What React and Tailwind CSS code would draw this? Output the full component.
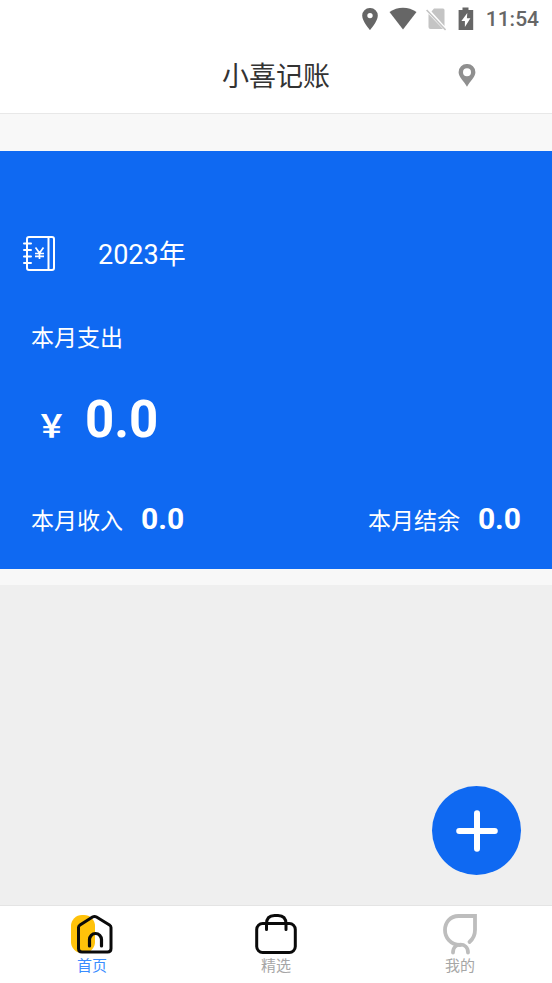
import React from 'react';

function StatusBar() {
  return (
    <div className="flex h-[38px] items-center justify-end pr-[13px] text-[#666666]">
      <svg className="mr-[11px] h-6 w-4" viewBox="0 0 16 24" fill="currentColor" aria-hidden="true">
        <path fillRule="evenodd" d="M8 1A7.500 7.500 0 0 0 .2 8.700c0 5.400 7.800 14.300 7.800 14.300s7.800-8.900 7.800-14.300A7.500 7.500 0 0 0 8 1zm0 4.900a2.700 2.700 0 1 1 0 5.400 2.700 2.700 0 0 1 0-5.400z" />
      </svg>
      <svg className="mr-[9px] h-6 w-7" viewBox="0 0 28 24" fill="currentColor" aria-hidden="true">
        <path d="M.5 5C8.500-.8 19.500-.8 27.500 5L14 22.500z" />
      </svg>
      <svg className="mr-3 h-6 w-5" viewBox="0 0 20 24" aria-hidden="true">
        <path fill="#c4c4c4" d="M8 1.500h9a1.500 1.500 0 0 1 1.500 1.500v16L5.500 4.500z M2.500 7l14.500 15h-12.500a2 2 0 0 1-2-2z" />
        <path stroke="#c4c4c4" strokeWidth="1.600" d="M.6 3l19 20" />
      </svg>
      <svg className="mr-3 h-6 w-4" viewBox="0 0 16 24" aria-hidden="true">
        <path fill="currentColor" d="M4.500 .6h6v2.300h4.700v20H.6v-20h3.900z" />
        <path fill="#fff" d="M9.300 6L3.400 14h3.500v6l5.500-8.800H8.900z" />
      </svg>
      <span className="font-['Roboto'] text-[21px] font-medium leading-6">11:54</span>
    </div>
  );
}

function Header() {
  return (
    <header className="grid h-[76px] grid-cols-3 items-center border-b border-[#e8e8e8]">
      <h1 className="col-start-2 pt-0.5 text-center text-[27px] leading-9 text-[#333333]">小喜记账</h1>
      <button type="button" aria-label="定位" className="mr-[76px] justify-self-end text-[#8f8f8f]">
        <svg className="h-6 w-[18px]" viewBox="0 0 18 24" fill="currentColor" aria-hidden="true">
          <path fillRule="evenodd" d="M9 0A8.200 8.200 0 0 0 .6 8.200C.6 13 6 17 9 22.800 12 17 17.400 13 17.400 8.200A8.200 8.200 0 0 0 9 0zm0 4.200a4 4 0 1 1 0 8 4 4 0 0 1 0-8z" />
        </svg>
      </button>
    </header>
  );
}

function Ledger() {
  return (
    <svg className="h-9 w-[33px]" viewBox="0 0 33 36" fill="none" stroke="#fff" strokeWidth="2" strokeLinecap="round" aria-hidden="true">
      <rect x="4" y="2" width="27" height="33" rx="2" />
      <path d="M25.500 2.500v32" />
      <path d="M1 8.500h7M1 15h7M1 21.500h7M1 28h7" />
      <path d="M12.500 12.500l4 5.500 4-5.500M16.500 17.500v6.500M12 18.500h9M12 21.300h9" strokeWidth="1.700" strokeLinecap="butt" />
    </svg>
  );
}

function Total({ label, value }) {
  return (
    <div className="flex items-center gap-[18px]">
      <span className="pt-1.5 text-[23px] leading-8">{label}</span>
      <span className="text-[30px] font-bold leading-8">{value}</span>
    </div>
  );
}

function Summary() {
  return (
    <section className="bg-[#0f69f2] px-[31px] pb-[31px] pt-[82px] text-white">
      <div className="-ml-2 flex items-center gap-[42px]">
        <Ledger />
        <h2 className="pt-1 text-[27px] leading-9">2023年</h2>
      </div>
      <p className="mt-12 text-[23px] leading-9">本月支出</p>
      <p className="mt-[30px] flex items-baseline gap-[18px] pl-[5px]">
        <span className="text-[31px] font-bold leading-9">{'\uFFE5'}</span>
        <span className="text-[51px] font-bold leading-[66px]">0.0</span>
      </p>
      <div className="mt-[47px] flex items-center justify-between">
        <Total label="本月收入" value="0.0" />
        <Total label="本月结余" value="0.0" />
      </div>
    </section>
  );
}

function HomeIcon() {
  return (
    <svg className="h-[42px] w-[42px]" viewBox="0 0 42 42" fill="none" aria-hidden="true">
      <rect x="0" y="2" width="24" height="38" rx="11" fill="#ffc20a" />
      <path d="M7.500 14.500q0-1.500 1.500-2.500L21.500 4q2-1.200 4 0L38.500 12q1.500 1 1.500 2.500V35.500q0 3.500-3.500 3.500H11q-3.500 0-3.500-3.500z" stroke="#0a0a0a" strokeWidth="3" strokeLinejoin="round" />
      <path d="M18.500 33v-6.500a6 6 0 0 1 12 0V33" stroke="#0a0a0a" strokeWidth="3.200" strokeLinecap="round" />
    </svg>
  );
}

function BagIcon() {
  return (
    <svg className="h-[42px] w-[42px]" viewBox="0 0 42 42" fill="none" stroke="#0a0a0a" strokeWidth="3" strokeLinecap="round" aria-hidden="true">
      <rect x="1.700" y="10.500" width="38.600" height="29" rx="6" />
      <path d="M11.500 16.500V11q0-8.500 8-8.500h3.500q8 0 8 8.500v5.500" />
    </svg>
  );
}

function ProfileIcon() {
  return (
    <svg className="h-[42px] w-[42px]" viewBox="0 0 42 42" fill="none" stroke="#bdbdbd" strokeWidth="3.800" strokeLinecap="round" aria-hidden="true">
      <path d="M30.500 29c4-3.500 5.500-6.500 5.500-12V3H19.500C11 3 6 9.500 6 17s5.500 15 15 15" />
      <path d="M14 39.500c0-10.500 15-10.500 15 0" />
    </svg>
  );
}

function Tab({ href, label, color, children, current }) {
  return (
    <a href={href} aria-current={current ? 'page' : undefined} className={`flex flex-1 flex-col items-center pt-[7px] ${color}`}>
      {children}
      <span className="text-[15px] leading-[22px]">{label}</span>
    </a>
  );
}

export default function App() {
  return (
    <div className="flex min-h-screen flex-col bg-white font-['Roboto','Noto_Sans_CJK_SC',sans-serif]">
      <StatusBar />
      <Header />
      <main className="flex flex-1 flex-col bg-[#efefef]">
        <div className="bg-[#f8f8f8] pb-4 pt-[37px]">
          <Summary />
        </div>
        <button type="button" aria-label="记一笔" className="mb-[30px] mr-[31px] mt-auto flex h-[89px] w-[89px] items-center justify-center self-end rounded-full bg-[#0f69f2]">
          <svg className="h-[42px] w-[42px]" viewBox="0 0 42 42" stroke="#fff" strokeWidth="6" strokeLinecap="round" aria-hidden="true">
            <path d="M21 3.200v35.600M3.200 21h35.600" />
          </svg>
        </button>
      </main>
      <nav className="flex h-[78px] border-t border-[#e4e4e4]">
        <Tab href="#home" label="首页" color="text-[#3a8dff]" current><HomeIcon /></Tab>
        <Tab href="#featured" label="精选" color="text-[#a6a6a6]"><BagIcon /></Tab>
        <Tab href="#mine" label="我的" color="text-[#a6a6a6]"><ProfileIcon /></Tab>
      </nav>
    </div>
  );
}
